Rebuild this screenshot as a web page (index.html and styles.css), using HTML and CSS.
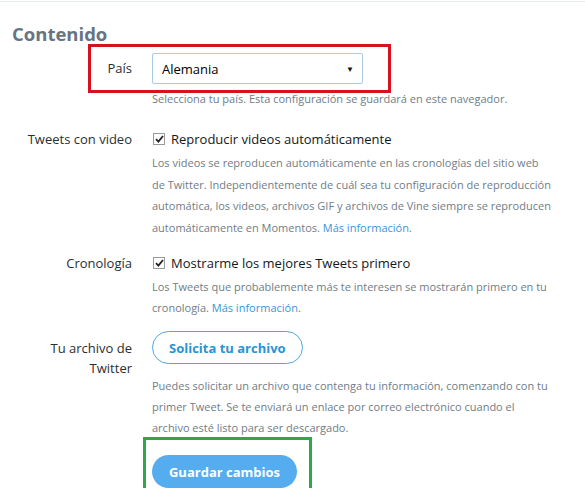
FILE: index.html
```html
<!DOCTYPE html>
<html lang="es">
<head>
    <meta charset="UTF-8">
    <meta name="viewport" content="width=device-width, initial-scale=1.0">
    <title>Contenido</title>
    <link rel="stylesheet" href="styles.css">
</head>
<body>
    <section class="settings">
        <h2>Contenido</h2>

        <!-- País -->
        <div class="row row-country">
            <span class="mark mark-red"></span>
            <label class="row-label">País</label>
            <div class="row-control">
                <div class="select">
                    <span>Alemania</span>
                    <span class="arrow">▼</span>
                </div>
                <p class="help help-country">Selecciona tu país. Esta configuración se guardará en este navegador.</p>
            </div>
        </div>

        <!-- Tweets con video -->
        <div class="row row-video">
            <label class="row-label">Tweets con video</label>
            <div class="row-control">
                <div class="check">
                    <span class="check-box">
                        <svg width="9" height="8" viewBox="0 0 9 8"><path d="M1 4.2 L3.4 6.6 L8 1" fill="none" stroke="#222" stroke-width="1.8"/></svg>
                    </span>
                    Reproducir videos automáticamente
                </div>
                <p class="help">Los videos se reproducen automáticamente en las cronologías del sitio web<br>de Twitter. Independientemente de cuál sea tu configuración de reproducción automática, los videos, archivos GIF y archivos de Vine siempre se reproducen automáticamente en Momentos. <a href="#">Más información</a>.</p>
            </div>
        </div>

        <!-- Cronología -->
        <div class="row row-timeline">
            <label class="row-label">Cronología</label>
            <div class="row-control">
                <div class="check">
                    <span class="check-box">
                        <svg width="9" height="8" viewBox="0 0 9 8"><path d="M1 4.2 L3.4 6.6 L8 1" fill="none" stroke="#222" stroke-width="1.8"/></svg>
                    </span>
                    Mostrarme los mejores Tweets primero
                </div>
                <p class="help">Los Tweets que probablemente más te interesen se mostrarán primero en tu cronología. <a href="#">Más información</a>.</p>
            </div>
        </div>

        <!-- Archivo -->
        <div class="row row-archive">
            <label class="row-label">Tu archivo de Twitter</label>
            <div class="row-control">
                <button class="btn btn-outline">Solicita tu archivo</button>
                <p class="help">Puedes solicitar un archivo que contenga tu información, comenzando con tu primer Tweet. Se te enviará un enlace por correo electrónico cuando el archivo esté listo para ser descargado.</p>
            </div>
        </div>

        <div class="row row-save">
            <span class="row-label"></span>
            <div class="row-control">
                <span class="mark mark-green"></span>
                <button class="btn btn-primary">Guardar cambios</button>
            </div>
        </div>
    </section>
</body>
</html>
```

FILE: styles.css
```css
body {
    font-family: 'Open Sans', 'Noto Sans', sans-serif;
    background-color: #fff;
    color: #14171a;
    margin: 0;
    padding: 0;
}

.settings {
    margin-top: 1px;
    border-top: 1px solid #e6ecf0;
    padding: 0 33px 0 12px;
}

h2 {
    font-size: 18.5px;
    line-height: 24px;
    font-weight: 700;
    color: #66757f;
    margin: 20px 0 0 0;
}

/* Filas de configuración */
.row {
    position: relative;
    display: grid;
    grid-template-columns: 120px 1fr;
    column-gap: 20px;
    margin-top: 18px;
}

.row-country {
    margin-top: 7px;
}

.row-video {
    margin-top: 20px;
}

.row-timeline {
    margin-top: 15px;
}

.row-label {
    text-align: right;
    font-size: 13px;
    line-height: 20px;
    color: #292f33;
}

.row-country .row-label {
    line-height: 31px;
}

.row-archive {
    margin-top: 13px;
}

.row-archive .row-label {
    padding: 7px 0 0 33px;
}

.row-control {
    position: relative;
    min-width: 0;
}

.select {
    box-sizing: border-box;
    width: 211px;
    height: 31px;
    border: 1px solid #a9cbe3;
    border-radius: 2px;
    display: flex;
    align-items: center;
    justify-content: space-between;
    padding: 0 8px 0 9px;
    font-size: 13px;
    color: #000;
}

.arrow {
    font-size: 8px;
    color: #111;
}

.help {
    margin: 3px 0 0 0;
    font-size: 11px;
    line-height: 21px;
    color: #6f7d87;
}

.row-video .help {
    line-height: 21.5px;
}

.help-country {
    margin-top: 4px;
}

.help a {
    color: #3b94d9;
    text-decoration: none;
}

.check {
    display: flex;
    align-items: center;
    gap: 6px;
    font-size: 13px;
    line-height: 20px;
    color: #14171a;
}

.check-box {
    box-sizing: border-box;
    width: 12px;
    height: 12px;
    margin-left: 1px;
    border: 1px solid #9a9a9a;
    background: #fff;
    display: flex;
    align-items: center;
    justify-content: center;
}

.btn {
    font-family: inherit;
    font-size: 13px;
    font-weight: 700;
    height: 33px;
    border-radius: 17px;
    white-space: nowrap;
    cursor: pointer;
}

.btn-outline {
    background: #fff;
    border: 1px solid #4aa8dc;
    color: #2a93d5;
    padding: 0 16px;
}

.row-archive .help {
    margin-top: 11px;
}

.row-save {
    margin-top: 17px;
}

.btn-primary {
    background: #55acee;
    border: none;
    color: #fff;
    padding: 0 16px;
    min-width: 145px;
}

/* Recuadros de anotación */
.mark {
    position: absolute;
    box-sizing: border-box;
    pointer-events: none;
}

.mark-red {
    left: 76px;
    top: -9px;
    width: 303px;
    height: 49px;
    border: 3px solid #d5121e;
}

.mark-green {
    left: -9px;
    top: -18px;
    width: 169px;
    height: 62px;
    border: 3px solid #2ea84a;
}
```
